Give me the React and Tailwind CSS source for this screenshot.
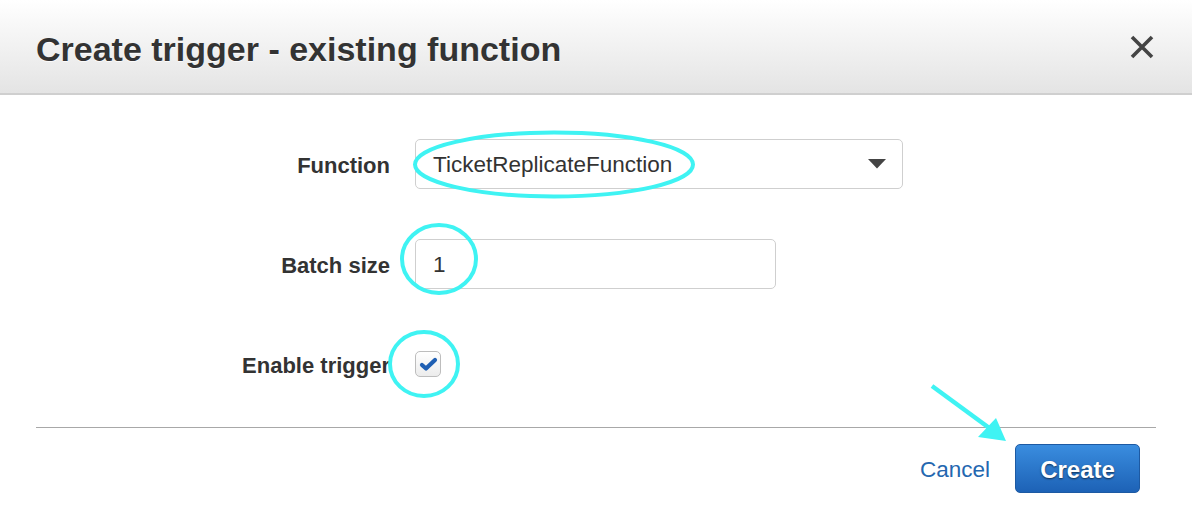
import React from "react";

export default function App() {
  return (
    <div className="relative w-[1192px] h-[515px] overflow-hidden bg-white font-['Liberation_Sans',Arial,sans-serif] text-[#333]">
      {/* Header */}
      <div className="h-[95px] flex items-center justify-between pl-[36px] pr-[38px] bg-gradient-to-b from-white to-[#e4e4e4] border-b-2 border-[#cfcfcf]">
        <h1 className="text-[34px] font-bold text-[#333] leading-none pt-[4px] [text-shadow:0_1px_0_rgba(255,255,255,0.8)]">Create trigger - existing function</h1>
        <svg width="24" height="24" viewBox="0 0 24 24" className="text-[#444]">
          <path d="M2 2 L22 22 M22 2 L2 22" stroke="currentColor" strokeWidth="3.6" strokeLinecap="butt" />
        </svg>
      </div>

      {/* Form */}
      <div className="pt-[44px] grid grid-cols-[390px_1fr] gap-x-[25px] gap-y-[50px] items-center">
        <label className="text-right text-[22px] font-bold leading-none pt-[4px]">Function</label>
        <div className="w-[488px] h-[50px] flex items-center justify-between pl-[17px] pr-[16px] border border-[#cfcfcf] rounded-[5px] bg-white">
          <span className="text-[22.5px] text-[#333] pt-[2px]">TicketReplicateFunction</span>
          <svg width="18" height="10" viewBox="0 0 18 10">
            <path d="M0 0 H18 L9 9.5 Z" fill="#444" />
          </svg>
        </div>

        <label className="text-right text-[22px] font-bold leading-none pt-[4px]">Batch size</label>
        <div className="w-[361px] h-[50px] flex items-center pl-[17px] border border-[#cfcfcf] rounded-[5px] bg-white">
          <span className="text-[22.5px] text-[#333] pt-[2px]">1</span>
        </div>

        <label className="text-right text-[22px] font-bold leading-none pt-[4px]">Enable trigger</label>
        <div className="h-[50px] flex items-center">
          <div className="w-[26px] h-[26px] rounded-[5px] border border-[#bdbdbd] bg-gradient-to-b from-white to-[#ececec] flex items-center justify-center">
            <svg width="19" height="15" viewBox="0 0 19 15">
              <path d="M3 8 L7 11.5 L16 3" fill="none" stroke="#1f5fb3" strokeWidth="4.2" strokeLinecap="round" strokeLinejoin="round" />
            </svg>
          </div>
        </div>
      </div>

      {/* Divider */}
      <div className="mt-[38px] mx-[36px] h-px bg-[#a8a8a8]" />

      {/* Footer */}
      <div className="mt-[16px] mr-[52px] flex items-center justify-end gap-[25px]">
        <span className="text-[22.5px] text-[#2467b0] pt-[2px]">Cancel</span>
        <button className="w-[125px] h-[49px] rounded-[5px] border border-[#1d5aa3] bg-gradient-to-b from-[#3a8ddf] to-[#1d62b6] text-white text-[24px] font-bold pt-[3px] [text-shadow:0_1px_2px_rgba(0,0,0,0.6)]">
          Create
        </button>
      </div>

      {/* Annotations */}
      <svg className="absolute inset-0 pointer-events-none" width="1192" height="515" viewBox="0 0 1192 515">
        <g fill="none" stroke="#3ff3f3" strokeWidth="4">
          <ellipse cx="554" cy="164.5" rx="139" ry="32" />
          <ellipse cx="439" cy="259" rx="37" ry="34" />
          <ellipse cx="424" cy="364" rx="34" ry="32" />
          <path d="M932 386 L992 430" strokeWidth="4.5" />
        </g>
        <path d="M1006 441 L978 437 L996 418 Z" fill="#3ff3f3" />
      </svg>
    </div>
  );
}
